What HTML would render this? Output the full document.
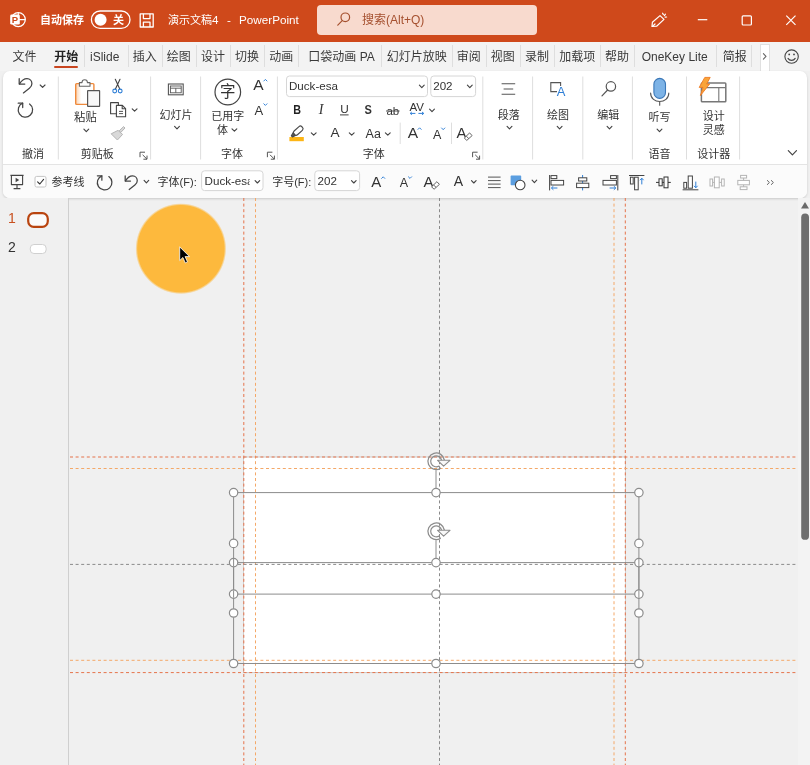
<!DOCTYPE html>
<html lang="zh-CN"><head><meta charset="utf-8"><title>PowerPoint</title>
<style>
*{box-sizing:border-box;margin:0;padding:0}
html,body{width:810px;height:765px;overflow:hidden}
body{background:#f0f0f0;font-family:"Liberation Sans","Noto Sans CJK SC",sans-serif;font-size:12px;color:#333;position:relative}
.abs{position:absolute}
#title{left:0;top:0;width:810px;height:42px;background:#cf491b}
#title .t{position:absolute;color:#fff;font-size:12px;line-height:16px;white-space:nowrap}
#search{left:317px;top:5px;width:220px;height:30px;background:#f8dace;border-radius:4px}
#tabs{left:0;top:42px;width:810px;height:29px;background:#f3f3f3}
#tabs .tb{position:absolute;top:7.3px;font-size:12px;line-height:16px;color:#3a3a3a;white-space:nowrap}
#tabs .sep{position:absolute;top:3px;width:1px;height:22px;background:#dedede}
#panel{left:3px;top:71px;width:803.5px;height:126.5px;background:#fff;border-radius:7px;box-shadow:0 1px 2.5px rgba(0,0,0,.16)}
#panel .hl{position:absolute;left:0;top:92.8px;width:803.5px;height:1.4px;background:#e4e4e4}
#panel .qb{position:absolute;left:0;top:94px;width:803.5px;height:32.5px;background:#fbfbfb;border-radius:0 0 7px 7px}
#left{left:0;top:198px;width:69px;height:567px;background:#f0f0f0;border-right:1px solid #cfcfcf}
svg{position:absolute;left:0;top:0;overflow:visible}
svg text{font-family:"Liberation Sans","Noto Sans CJK SC",sans-serif}
#wrap{position:absolute;left:0;top:0;width:810px;height:765px;will-change:transform}
</style></head><body><div id="wrap">

<div id="title" class="abs">
<div class="t" style="left:40px;top:11.5px;font-size:11px;font-weight:bold">自动保存</div>
<div class="t" style="left:113px;top:11.5px;font-size:11px;font-weight:bold">关</div>
<div class="t" style="left:168px;top:11.5px;font-size:11px">演示文稿</div>
<div class="t" style="left:212px;top:11.5px;font-size:11.7px">4</div>
<div class="t" style="left:227px;top:11.5px;font-size:11.7px">-</div>
<div class="t" style="left:239px;top:11.5px;font-size:11.7px">PowerPoint</div>
<div id="search" class="abs"><span class="abs" style="left:45px;top:7px;font-size:12px;line-height:16px;color:#a5502f;white-space:nowrap">搜索(Alt+Q)</span></div>
</div>
<div id="tabs" class="abs">
<span class="tb" style="left:12.5px">文件</span>
<span class="tb" style="left:54.3px;font-weight:bold;color:#222">开始</span>
<span class="tb" style="left:90px">iSlide</span>
<span class="tb" style="left:132.7px">插入</span>
<span class="tb" style="left:166.7px">绘图</span>
<span class="tb" style="left:201px">设计</span>
<span class="tb" style="left:235px">切换</span>
<span class="tb" style="left:269.3px">动画</span>
<span class="tb" style="left:308.3px">口袋动画 PA</span>
<span class="tb" style="left:386.7px">幻灯片放映</span>
<span class="tb" style="left:456.7px">审阅</span>
<span class="tb" style="left:490.7px">视图</span>
<span class="tb" style="left:525px">录制</span>
<span class="tb" style="left:559.3px">加载项</span>
<span class="tb" style="left:605px">帮助</span>
<span class="tb" style="left:641.7px">OneKey Lite</span>
<span class="tb" style="left:722.7px">简报</span>
<i class="sep" style="left:83.8px"></i>
<i class="sep" style="left:127.80000000000001px"></i>
<i class="sep" style="left:161.8px"></i>
<i class="sep" style="left:196.2px"></i>
<i class="sep" style="left:230.2px"></i>
<i class="sep" style="left:263.8px"></i>
<i class="sep" style="left:297.8px"></i>
<i class="sep" style="left:381.2px"></i>
<i class="sep" style="left:451.8px"></i>
<i class="sep" style="left:485.5px"></i>
<i class="sep" style="left:519.5px"></i>
<i class="sep" style="left:553.5px"></i>
<i class="sep" style="left:599.5px"></i>
<i class="sep" style="left:633.8px"></i>
<i class="sep" style="left:716.2px"></i>
<i class="sep" style="left:751.2px"></i>
<i class="abs" style="left:54.3px;top:24px;width:24px;height:2.4px;background:#c8451f;border-radius:1px"></i>
<i class="abs" style="left:759.5px;top:1.5px;width:10.5px;height:28px;background:#fff;border:1px solid #e0e0e0;border-bottom:none"></i>
</div>
<div id="panel" class="abs"><div class="qb"></div><div class="hl"></div></div>
<div id="left" class="abs"></div>
<div class="abs" style="left:8px;top:210px;font-size:14px;line-height:17px;color:#c8501f">1</div>
<div class="abs" style="left:8px;top:238.5px;font-size:14px;line-height:17px;color:#333">2</div>
<svg id="cv" width="810" height="765" viewBox="0 0 810 765">
<rect x="798" y="198" width="12" height="567" fill="#f3f3f3"/>
<rect x="243.5" y="457" width="382" height="215.6" fill="#fff"/>
<rect x="243.5" y="457" width="382" height="215.6" fill="none" stroke="#c8c8c8" stroke-width="0.9"/>
<defs><radialGradient id="og" cx="50%" cy="50%" r="50%"><stop offset="0" stop-color="#fdb93d"/><stop offset="0.95" stop-color="#fdb93d"/><stop offset="1" stop-color="#fdb93d" stop-opacity="0"/></radialGradient></defs>
<circle cx="180.9" cy="248.7" r="45.5" fill="url(#og)"/>
<line x1="243.8" y1="198" x2="243.8" y2="765" stroke="#e5734a" stroke-width="1" stroke-dasharray="3 2.6"/>
<line x1="255.5" y1="198" x2="255.5" y2="765" stroke="#f4a868" stroke-width="1" stroke-dasharray="3 2.6"/>
<line x1="614" y1="198" x2="614" y2="765" stroke="#f4a868" stroke-width="1" stroke-dasharray="3 2.6"/>
<line x1="625.3" y1="198" x2="625.3" y2="765" stroke="#e5734a" stroke-width="1" stroke-dasharray="3 2.6"/>
<line x1="70" y1="457" x2="798" y2="457" stroke="#e5734a" stroke-width="1" stroke-dasharray="3 2.6"/>
<line x1="70" y1="468.5" x2="798" y2="468.5" stroke="#f4a868" stroke-width="1" stroke-dasharray="3 2.6"/>
<line x1="70" y1="660.3" x2="798" y2="660.3" stroke="#f4a868" stroke-width="1" stroke-dasharray="3 2.6"/>
<line x1="70" y1="672.6" x2="798" y2="672.6" stroke="#e5734a" stroke-width="1" stroke-dasharray="3 2.6"/>
<line x1="439.5" y1="198" x2="439.5" y2="765" stroke="#8a8a8a" stroke-width="1" stroke-dasharray="3 2.6"/>
<line x1="70" y1="564.4" x2="798" y2="564.4" stroke="#8a8a8a" stroke-width="1" stroke-dasharray="3 2.6"/>
<rect x="233.6" y="492.6" width="405.3" height="101.5" fill="none" stroke="#8c8c8c" stroke-width="1"/>
<line x1="436" y1="470.20000000000005" x2="436" y2="492.6" stroke="#8c8c8c" stroke-width="1"/>
<rect x="233.6" y="562.6" width="405.3" height="100.9" fill="none" stroke="#8c8c8c" stroke-width="1"/>
<line x1="436" y1="540.2" x2="436" y2="562.6" stroke="#8c8c8c" stroke-width="1"/>
<circle cx="233.6" cy="492.6" r="4.2" fill="#fff" stroke="#8c8c8c" stroke-width="1.2"/>
<circle cx="436" cy="492.6" r="4.2" fill="#fff" stroke="#8c8c8c" stroke-width="1.2"/>
<circle cx="638.9" cy="492.6" r="4.2" fill="#fff" stroke="#8c8c8c" stroke-width="1.2"/>
<circle cx="233.6" cy="543.4" r="4.2" fill="#fff" stroke="#8c8c8c" stroke-width="1.2"/>
<circle cx="638.9" cy="543.4" r="4.2" fill="#fff" stroke="#8c8c8c" stroke-width="1.2"/>
<circle cx="233.6" cy="594.1" r="4.2" fill="#fff" stroke="#8c8c8c" stroke-width="1.2"/>
<circle cx="436" cy="594.1" r="4.2" fill="#fff" stroke="#8c8c8c" stroke-width="1.2"/>
<circle cx="638.9" cy="594.1" r="4.2" fill="#fff" stroke="#8c8c8c" stroke-width="1.2"/>
<g transform="translate(436.2 461.3)" fill="none" stroke="#8c8c8c" stroke-width="1.25" stroke-linejoin="round"><path d="M8.2 -1.2A8.3 8.3 0 1 0 4.15 7.2L2.75 4.76A5.5 5.5 0 1 1 5.4 -1"/><path d="M1.4 -1H13.8L7.4 4.9Z" fill="#f8f8f8" stroke-width="1.15"/></g>
<circle cx="233.6" cy="562.6" r="4.2" fill="#fff" stroke="#8c8c8c" stroke-width="1.2"/>
<circle cx="436" cy="562.6" r="4.2" fill="#fff" stroke="#8c8c8c" stroke-width="1.2"/>
<circle cx="638.9" cy="562.6" r="4.2" fill="#fff" stroke="#8c8c8c" stroke-width="1.2"/>
<circle cx="233.6" cy="613.0" r="4.2" fill="#fff" stroke="#8c8c8c" stroke-width="1.2"/>
<circle cx="638.9" cy="613.0" r="4.2" fill="#fff" stroke="#8c8c8c" stroke-width="1.2"/>
<circle cx="233.6" cy="663.5" r="4.2" fill="#fff" stroke="#8c8c8c" stroke-width="1.2"/>
<circle cx="436" cy="663.5" r="4.2" fill="#fff" stroke="#8c8c8c" stroke-width="1.2"/>
<circle cx="638.9" cy="663.5" r="4.2" fill="#fff" stroke="#8c8c8c" stroke-width="1.2"/>
<g transform="translate(436.2 531.3)" fill="none" stroke="#8c8c8c" stroke-width="1.25" stroke-linejoin="round"><path d="M8.2 -1.2A8.3 8.3 0 1 0 4.15 7.2L2.75 4.76A5.5 5.5 0 1 1 5.4 -1"/><path d="M1.4 -1H13.8L7.4 4.9Z" fill="#f8f8f8" stroke-width="1.15"/></g>
<line x1="233.6" y1="559.0" x2="233.6" y2="566.2" stroke="#8c8c8c" stroke-width="1"/>
<line x1="233.6" y1="590.5" x2="233.6" y2="597.7" stroke="#8c8c8c" stroke-width="1"/>
<line x1="638.9" y1="559.0" x2="638.9" y2="566.2" stroke="#8c8c8c" stroke-width="1"/>
<line x1="638.9" y1="590.5" x2="638.9" y2="597.7" stroke="#8c8c8c" stroke-width="1"/>
<path d="M179.7 246.9v13.6l3.2-3 2.4 5.4 2.2-1-2.4-5.3h4.4z" fill="#000" stroke="#fff" stroke-width="0.8"/>
<rect x="801.2" y="213.5" width="7.8" height="326.3" rx="3.9" fill="#6e6e6e"/>
<path d="M801 208.6L805 202l4 6.6z" fill="#6a6a6a"/>
<rect x="28.2" y="213.2" width="19.6" height="13.6" rx="5.5" fill="#fbfbfb" stroke="#b9440f" stroke-width="2.2"/>
<rect x="30.3" y="244.5" width="15.8" height="9" rx="3.6" fill="#fff" stroke="#d0d0d0" stroke-width="1"/>
</svg>
<svg id="rb" width="810" height="200" viewBox="0 0 810 200">
<g fill="none" stroke="#fff" stroke-width="1.3"><circle cx="18.3" cy="19.6" r="7"/><path d="M18.3 12.6V19.6H25.3" stroke-width="1.1"/></g>
<rect x="10.2" y="14.6" width="9.6" height="10" rx="1.4" fill="#fff"/>
<text x="15" y="23.2" font-size="9.5" font-weight="bold" text-anchor="middle" fill="#cf491b">P</text>
<rect x="91.4" y="11" width="38.6" height="17.4" rx="8.7" fill="none" stroke="#fff" stroke-width="1.3"/>
<circle cx="100.6" cy="19.7" r="6" fill="#fff"/>
<g fill="none" stroke="#fff" stroke-width="1.3" stroke-linejoin="round"><path d="M140.2 13.8H153.2V27H140.2Z"/><path d="M143.4 13.8V18.6H150V13.8"/><path d="M143.4 27V22.2H150V27"/></g>
<g fill="none" stroke="#a5502f" stroke-width="1.2" stroke-linecap="round"><circle cx="345.3" cy="17.3" r="4.3"/><path d="M342.2 20.6L337.8 25.2"/></g>
<g fill="none" stroke="#fff" stroke-width="1.2" stroke-linecap="round" stroke-linejoin="round"><path d="M660 15.6L664 19.4L656.6 26.2L652 26.4L652.4 22.2Z"/><path d="M652.4 26.4L655 24"/><path d="M662.6 13.2L663.4 14.6M665.4 14.2L664.4 15.6M666.6 17L665.2 17.2"/></g>
<g fill="none" stroke="#fff" stroke-width="1.2"><path d="M697.8 19.7H707.3"/><rect x="742.2" y="15.8" width="9.2" height="9.2" rx="1"/><path d="M786.3 15.6L795.5 24.8M795.5 15.6L786.3 24.8"/></g>
<path d="M763.4 53.6L766 56.4L763.4 59.2" fill="none" stroke="#666" stroke-width="1.1" stroke-linecap="round" stroke-linejoin="round"/>
<g fill="none" stroke="#444" stroke-width="1.1" stroke-linecap="round"><circle cx="791.6" cy="56.6" r="6.7"/><path d="M788 58.4C789.6 61 793.6 61 795.2 58.4"/></g><circle cx="789.2" cy="54.4" r="0.9" fill="#444"/><circle cx="794" cy="54.4" r="0.9" fill="#444"/>
<line x1="58.3" y1="76.5" x2="58.3" y2="159.5" stroke="#dedede" stroke-width="1"/>
<line x1="150.6" y1="76.5" x2="150.6" y2="159.5" stroke="#dedede" stroke-width="1"/>
<line x1="200.6" y1="76.5" x2="200.6" y2="159.5" stroke="#dedede" stroke-width="1"/>
<line x1="277.4" y1="76.5" x2="277.4" y2="159.5" stroke="#dedede" stroke-width="1"/>
<line x1="482.8" y1="76.5" x2="482.8" y2="159.5" stroke="#dedede" stroke-width="1"/>
<line x1="532.6" y1="76.5" x2="532.6" y2="159.5" stroke="#dedede" stroke-width="1"/>
<line x1="582.8" y1="76.5" x2="582.8" y2="159.5" stroke="#dedede" stroke-width="1"/>
<line x1="632.4" y1="76.5" x2="632.4" y2="159.5" stroke="#dedede" stroke-width="1"/>
<line x1="686.5" y1="76.5" x2="686.5" y2="159.5" stroke="#dedede" stroke-width="1"/>
<line x1="739.6" y1="76.5" x2="739.6" y2="159.5" stroke="#dedede" stroke-width="1"/>
<g transform="translate(19.2 78.5) scale(1.0) translate(-19.2 -78.5)" fill="none" stroke="#444" stroke-width="1.25" stroke-linecap="round" stroke-linejoin="round"><path d="M19.2 78.7V84.1H24.8"/><path d="M19.5 83.9C21.5 80.5 24 78.6 27 78.6C30 78.6 31.9 81 31.9 83.8C31.9 85.6 31 87 29.4 88.2L23.4 92.9"/></g>
<path d="M40.2 85.0L42.6 87.4L45.0 85.0" fill="none" stroke="#444" stroke-width="1.15" stroke-linecap="round" stroke-linejoin="round"/>
<path d="M29.58 104.00A7.2 7.2 0 1 1 22.70 103.20" fill="none" stroke="#444" stroke-width="1.25" stroke-linecap="round"/>
<path d="M18.20 103.20H22.70V107.60" fill="none" stroke="#444" stroke-width="1.25" stroke-linecap="round" stroke-linejoin="round"/>
<text x="33" y="158.1" font-size="11" text-anchor="middle" fill="#333" font-weight="normal" >撤消</text>
<defs><linearGradient id="pg" x1="0" x2="1" y1="0" y2="0"><stop offset="0" stop-color="#fbd3b0"/><stop offset="0.3" stop-color="#fff"/></linearGradient></defs>
<rect x="75.7" y="83.6" width="18.2" height="20.8" rx="1" fill="url(#pg)" stroke="#ef8a3c" stroke-width="1.4"/>
<path d="M79.4 86.2V82.6H82C82 78.8 87.4 78.8 87.4 82.6H90V86.2Z" fill="#fff" stroke="#666" stroke-width="1.1" stroke-linejoin="round"/>
<rect x="87.6" y="90.6" width="12" height="15.8" rx="0.4" fill="#f8f8f8" stroke="#555" stroke-width="1.2"/>
<text x="85.4" y="121.2" font-size="11.3" text-anchor="middle" fill="#333" font-weight="normal" >粘贴</text>
<path d="M83.9 129.2L86.3 131.6L88.7 129.2" fill="none" stroke="#444" stroke-width="1.15" stroke-linecap="round" stroke-linejoin="round"/>
<g fill="none" stroke="#444" stroke-width="1.1" stroke-linecap="round"><path d="M115.3 79.2L120 89.4M120 79.2L115.2 89.4"/></g>
<g fill="none" stroke="#2f7fd6" stroke-width="1.1"><circle cx="114.7" cy="91" r="1.9"/><circle cx="120.2" cy="91" r="1.9"/></g>
<g fill="#fff" stroke="#444" stroke-width="1.1" stroke-linejoin="round"><path d="M110.6 102.6H118.4V113.8H110.6Z"/><path d="M116.4 105.4H122.4L125.6 108.6V116.8H116.4Z"/><path d="M122.2 105.6V108.8H125.4" fill="none"/><path d="M119 111.4H123M119 113.6H123" stroke-width="0.9"/></g>
<path d="M132.2 108.8L134.6 111.2L137.0 108.8" fill="none" stroke="#444" stroke-width="1.15" stroke-linecap="round" stroke-linejoin="round"/>
<g fill="#d9d9d9" stroke="#b4b4b4" stroke-width="1" stroke-linejoin="round"><path d="M123.6 126.6L125 128L120.8 132.4L119.2 130.8Z"/><path d="M118 130.4L122.6 134.4L117.4 140L111.2 133.8Z"/></g>
<text x="97.2" y="158.1" font-size="11" text-anchor="middle" fill="#333" font-weight="normal" >剪贴板</text>
<path d="M140 157.2V152.2H145M142.6 154.79999999999998L147 159.2M147 155.6V159.2H143.4" fill="none" stroke="#555" stroke-width="1"/>
<g fill="none" stroke="#555" stroke-width="1.1"><rect x="168.4" y="84" width="14.8" height="10.8"/><rect x="170.4" y="86" width="10.8" height="6.8" stroke-width="0.9"/><path d="M170.4 88.2H181.2M175.8 88.2V92.8" stroke-width="0.9"/></g>
<text x="176" y="118.6" font-size="11" text-anchor="middle" fill="#333" font-weight="normal" >幻灯片</text>
<path d="M174.6 126.4L177.0 128.8L179.4 126.4" fill="none" stroke="#444" stroke-width="1.15" stroke-linecap="round" stroke-linejoin="round"/>
<circle cx="227.8" cy="92" r="12.8" fill="none" stroke="#444" stroke-width="1.2"/>
<text x="227.8" y="97.3" font-size="15.5" text-anchor="middle" fill="#333" font-weight="normal" >字</text>
<text x="227.8" y="120.0" font-size="11" text-anchor="middle" fill="#333" font-weight="normal" >已用字</text>
<text x="222.4" y="133.5" font-size="11" text-anchor="middle" fill="#333" font-weight="normal" >体</text>
<path d="M232.0 128.8L234.4 131.2L236.8 128.8" fill="none" stroke="#444" stroke-width="1.15" stroke-linecap="round" stroke-linejoin="round"/>
<text x="232" y="157.7" font-size="11" text-anchor="middle" fill="#333" font-weight="normal" >字体</text>
<text x="258.4" y="90.3" font-size="15.5" text-anchor="middle" fill="#333" font-weight="normal" >A</text>
<path d="M263.8 81.0L265.4 79.4L267.0 81.0" fill="none" stroke="#2f7fd6" stroke-width="0.95" stroke-linecap="round" stroke-linejoin="round"/>
<text x="258.8" y="114.5" font-size="13" text-anchor="middle" fill="#333" font-weight="normal" >A</text>
<path d="M263.8 103.8L265.4 105.4L267.0 103.8" fill="none" stroke="#2f7fd6" stroke-width="0.95" stroke-linecap="round" stroke-linejoin="round"/>
<path d="M267.4 157.2V152.2H272.4M270.0 154.79999999999998L274.4 159.2M274.4 155.6V159.2H270.79999999999995" fill="none" stroke="#555" stroke-width="1"/>
<rect x="286.5" y="76" width="141" height="20.6" rx="3" fill="#fff" stroke="#d6d6d6" stroke-width="1"/>
<text x="289" y="89.9" font-size="11.6" text-anchor="start" fill="#333" font-weight="normal" >Duck-esa</text>
<path d="M419.4 85.2L421.8 87.6L424.2 85.2" fill="none" stroke="#444" stroke-width="1.15" stroke-linecap="round" stroke-linejoin="round"/>
<rect x="430.8" y="76" width="44.8" height="20.6" rx="3" fill="#fff" stroke="#d6d6d6" stroke-width="1"/>
<text x="433.2" y="89.9" font-size="11.6" text-anchor="start" fill="#333" font-weight="normal" >202</text>
<path d="M467.4 85.2L469.8 87.6L472.2 85.2" fill="none" stroke="#444" stroke-width="1.15" stroke-linecap="round" stroke-linejoin="round"/>
<text transform="translate(297.2 113.6) scale(0.84 1)" font-size="12.8" font-weight="bold" text-anchor="middle" fill="#222">B</text>
<text x="321" y="113.6" font-size="14" text-anchor="middle" fill="#333" font-style="italic" font-family="Liberation Serif,serif" style="font-family:'Liberation Serif',serif">I</text>
<text x="344.4" y="113.0" font-size="11.8" text-anchor="middle" fill="#333" font-weight="normal" >U</text>
<path d="M340 114.9H348.6" stroke="#444" stroke-width="1"/>
<text transform="translate(368.2 113.6) scale(0.86 1)" font-size="12.8" font-weight="bold" text-anchor="middle" fill="#333">S</text>
<text x="392.8" y="114.8" font-size="11.5" text-anchor="middle" fill="#333" font-weight="normal" >ab</text>
<path d="M386 111H399.6" stroke="#444" stroke-width="0.9"/>
<text x="416.8" y="110.7" font-size="11.5" text-anchor="middle" fill="#333" font-weight="normal" >AV</text>
<path d="M410.4 113.4H415.4M411.8 112L410.2 113.4L411.8 114.8M418.4 113.4H423.6M422 112L423.8 113.4L422 114.8" fill="none" stroke="#2f7fd6" stroke-width="1"/>
<path d="M429.6 109.2L432.0 111.6L434.4 109.2" fill="none" stroke="#444" stroke-width="1.15" stroke-linecap="round" stroke-linejoin="round"/>
<rect x="289.4" y="137" width="14.4" height="4.2" fill="#fdb515"/>
<g transform="translate(297.4 131.4) rotate(-42)" fill="#fff" stroke="#4a4a4a" stroke-width="1.15" stroke-linejoin="round"><rect x="-4.2" y="-2.5" width="10.6" height="5" rx="2"/><path d="M-4.2 -1.8L-7.4 -0.8V0.8L-4.2 1.8Z" fill="#555"/></g>
<path d="M311.3 132.8L313.7 135.2L316.1 132.8" fill="none" stroke="#444" stroke-width="1.15" stroke-linecap="round" stroke-linejoin="round"/>
<text x="335" y="136.5" font-size="13.6" text-anchor="middle" fill="#333" font-weight="normal" >A</text>
<path d="M349.3 132.8L351.7 135.2L354.1 132.8" fill="none" stroke="#444" stroke-width="1.15" stroke-linecap="round" stroke-linejoin="round"/>
<text x="373.2" y="138.2" font-size="12.5" text-anchor="middle" fill="#333" font-weight="normal" >Aa</text>
<path d="M385.4 132.8L387.8 135.2L390.2 132.8" fill="none" stroke="#444" stroke-width="1.15" stroke-linecap="round" stroke-linejoin="round"/>
<line x1="400.2" y1="122.6" x2="400.2" y2="144" stroke="#dedede" stroke-width="1"/>
<text x="412.8" y="138.1" font-size="15.5" text-anchor="middle" fill="#333" font-weight="normal" >A</text>
<path d="M418.0 129.4L419.6 127.8L421.2 129.4" fill="none" stroke="#2f7fd6" stroke-width="0.95" stroke-linecap="round" stroke-linejoin="round"/>
<text x="437.2" y="138.6" font-size="12.5" text-anchor="middle" fill="#333" font-weight="normal" >A</text>
<path d="M441.6 128.0L443.2 129.7L444.8 128.0" fill="none" stroke="#2f7fd6" stroke-width="0.95" stroke-linecap="round" stroke-linejoin="round"/>
<line x1="451.5" y1="122.6" x2="451.5" y2="144" stroke="#dedede" stroke-width="1"/>
<text x="461.6" y="138.0" font-size="15" text-anchor="middle" fill="#333" font-weight="normal" >A</text>
<path d="M464.3 138.1L469.6 132.9L472.1 135.6L466.8 140.4Z M466.3 136.2L468.8 138.6" fill="#fff" stroke="#555" stroke-width="0.9" stroke-linejoin="round"/>
<text x="373.7" y="158.1" font-size="11" text-anchor="middle" fill="#333" font-weight="normal" >字体</text>
<path d="M472.6 157.2V152.2H477.6M475.20000000000005 154.79999999999998L479.6 159.2M479.6 155.6V159.2H476.0" fill="none" stroke="#555" stroke-width="1"/>
<path d="M501.6 83.8H515.2M503.6 89H513.2M501.6 94.3H515.2" stroke="#555" stroke-width="1.1"/>
<text x="508.7" y="118.6" font-size="11" text-anchor="middle" fill="#333" font-weight="normal" >段落</text>
<path d="M507.1 126.4L509.5 128.8L511.9 126.4" fill="none" stroke="#444" stroke-width="1.15" stroke-linecap="round" stroke-linejoin="round"/>
<path d="M557 91.6H550.8V82.6H560.6V86" fill="none" stroke="#555" stroke-width="1.1"/>
<text x="561" y="96.0" font-size="13" text-anchor="middle" fill="#2f7fd6" font-weight="normal" >A</text>
<text x="558.1" y="118.6" font-size="11" text-anchor="middle" fill="#333" font-weight="normal" >绘图</text>
<path d="M557.2 126.4L559.6 128.8L562.0 126.4" fill="none" stroke="#444" stroke-width="1.15" stroke-linecap="round" stroke-linejoin="round"/>
<g fill="none" stroke="#555" stroke-width="1.2" stroke-linecap="round"><circle cx="610.9" cy="86.4" r="4.7"/><path d="M607.6 90L602 95.8"/></g>
<text x="608.3" y="118.6" font-size="11" text-anchor="middle" fill="#333" font-weight="normal" >编辑</text>
<path d="M607.1 126.4L609.5 128.8L611.9 126.4" fill="none" stroke="#444" stroke-width="1.15" stroke-linecap="round" stroke-linejoin="round"/>
<rect x="653.9" y="78.4" width="11.6" height="20" rx="5.8" fill="#7db3e6" stroke="#3b78b8" stroke-width="1.1"/>
<path d="M650.6 93C650.6 104.4 668.8 104.4 668.8 93M659.7 101.6V105.2" fill="none" stroke="#555" stroke-width="1.1" stroke-linecap="round"/>
<text x="659.6" y="120.6" font-size="11" text-anchor="middle" fill="#333" font-weight="normal" >听写</text>
<path d="M657.1 129.2L659.5 131.6L661.9 129.2" fill="none" stroke="#444" stroke-width="1.15" stroke-linecap="round" stroke-linejoin="round"/>
<text x="659.6" y="157.7" font-size="11" text-anchor="middle" fill="#333" font-weight="normal" >语音</text>
<g fill="none" stroke="#777" stroke-width="1.5"><rect x="701.4" y="83" width="24.4" height="18.8" rx="0.8"/><path d="M701.4 87.6H725.8M718.8 87.6V101.8" stroke-width="1.1"/></g>
<path d="M704.8 77.4H710.2L706.6 84H709.6L700.4 95.6L703 87.4H699.2Z" fill="#f9a43a" stroke="#ee7b22" stroke-width="0.9" stroke-linejoin="round"/>
<text x="713.7" y="120.2" font-size="11" text-anchor="middle" fill="#333" font-weight="normal" >设计</text>
<text x="713.7" y="133.8" font-size="11" text-anchor="middle" fill="#333" font-weight="normal" >灵感</text>
<text x="713.7" y="158.1" font-size="11" text-anchor="middle" fill="#333" font-weight="normal" >设计器</text>
<path d="M788.3 150.7L792.4 154.9L796.5 150.7" fill="none" stroke="#444" stroke-width="1.2" stroke-linecap="round" stroke-linejoin="round"/>
<g fill="none" stroke="#444" stroke-width="1.1" stroke-linejoin="round"><path d="M10.4 175.4H23.6M11.4 175.4V184.6H22.6V175.4M17 184.6V188.6M13.6 188.6H20.4"/></g><path d="M15.6 177.8L19.2 180L15.6 182.2Z" fill="#444"/>
<rect x="35" y="176.4" width="11" height="10.6" rx="1.6" fill="#fff" stroke="#c4c4c4" stroke-width="1"/>
<path d="M37.6 181.8L39.8 184L43.6 179.4" fill="none" stroke="#333" stroke-width="1.1" stroke-linecap="round" stroke-linejoin="round"/>
<text x="51.4" y="186.1" font-size="11" text-anchor="start" fill="#333" font-weight="normal" >参考线</text>
<path d="M108.83 176.61A7.3 7.3 0 1 1 101.86 175.81" fill="none" stroke="#444" stroke-width="1.25" stroke-linecap="round"/>
<path d="M97.36 175.81H101.86V180.21" fill="none" stroke="#444" stroke-width="1.25" stroke-linecap="round" stroke-linejoin="round"/>
<g transform="translate(125.2 175.8) scale(0.95) translate(-19.2 -78.5)" fill="none" stroke="#444" stroke-width="1.32" stroke-linecap="round" stroke-linejoin="round"><path d="M19.2 78.7V84.1H24.8"/><path d="M19.5 83.9C21.5 80.5 24 78.6 27 78.6C30 78.6 31.9 81 31.9 83.8C31.9 85.6 31 87 29.4 88.2L23.4 92.9"/></g>
<path d="M144.1 180.4L146.4 182.8L148.7 180.4" fill="none" stroke="#444" stroke-width="1.15" stroke-linecap="round" stroke-linejoin="round"/>
<text x="157.6" y="185.5" font-size="11" text-anchor="start" fill="#333" font-weight="normal" >字体(F):</text>
<rect x="201.6" y="170.8" width="61.4" height="19.8" rx="3" fill="#fff" stroke="#d6d6d6" stroke-width="1"/>
<clipPath id="cp1"><rect x="202" y="171" width="47.6" height="19"/></clipPath>
<text x="204.6" y="184.9" font-size="11.6" text-anchor="start" fill="#333" font-weight="normal" clip-path="url(#cp1)">Duck-esa</text>
<path d="M255.1 180.7L257.4 183.0L259.7 180.7" fill="none" stroke="#444" stroke-width="1.15" stroke-linecap="round" stroke-linejoin="round"/>
<text x="272.2" y="185.5" font-size="11" text-anchor="start" fill="#333" font-weight="normal" >字号(F):</text>
<rect x="314.8" y="170.8" width="44.8" height="19.8" rx="3" fill="#fff" stroke="#d6d6d6" stroke-width="1"/>
<text x="317.6" y="184.9" font-size="11.6" text-anchor="start" fill="#333" font-weight="normal" >202</text>
<path d="M351.5 180.7L353.8 183.0L356.1 180.7" fill="none" stroke="#444" stroke-width="1.15" stroke-linecap="round" stroke-linejoin="round"/>
<text x="376.2" y="187.2" font-size="15" text-anchor="middle" fill="#333" font-weight="normal" >A</text>
<path d="M381.6 178.4L383.2 176.8L384.8 178.4" fill="none" stroke="#2f7fd6" stroke-width="0.95" stroke-linecap="round" stroke-linejoin="round"/>
<text x="404" y="187.2" font-size="12.5" text-anchor="middle" fill="#333" font-weight="normal" >A</text>
<path d="M408.4 176.8L410.0 178.4L411.6 176.8" fill="none" stroke="#2f7fd6" stroke-width="0.95" stroke-linecap="round" stroke-linejoin="round"/>
<text x="428.4" y="187.0" font-size="15" text-anchor="middle" fill="#333" font-weight="normal" >A</text>
<path d="M431.6 186.9L436.9 181.7L439.4 184.4L434.1 189.2Z M433.6 185L436.1 187.4" fill="#fff" stroke="#555" stroke-width="0.9" stroke-linejoin="round"/>
<text x="458.4" y="185.8" font-size="14" text-anchor="middle" fill="#333" font-weight="normal" >A</text>
<path d="M471.5 180.7L473.8 183.0L476.1 180.7" fill="none" stroke="#444" stroke-width="1.15" stroke-linecap="round" stroke-linejoin="round"/>
<path d="M488 177.1H500.6M488 180.6H500.6M488 184.1H500.6M488 187.6H500.6" stroke="#555" stroke-width="1"/>
<rect x="510.6" y="175.6" width="10.6" height="9.6" rx="0.8" fill="#5b9ee0"/>
<circle cx="520.2" cy="185" r="4.8" fill="#fff" stroke="#444" stroke-width="1.1"/>
<path d="M532.1 180.2L534.4 182.6L536.7 180.2" fill="none" stroke="#444" stroke-width="1.15" stroke-linecap="round" stroke-linejoin="round"/>
<g fill="#fff" stroke="#444" stroke-width="1"><path d="M549.6 175V190.4" /><rect x="551" y="175.6" width="5.8" height="3"/><rect x="551" y="180.4" width="12.6" height="4.6"/></g>
<path d="M557.4 188H551.6M553.4 186.2L551.4 188L553.4 189.8" fill="none" stroke="#2f7fd6" stroke-width="1"/>
<path d="M582.6 175V190.4" stroke="#2f7fd6" stroke-width="1"/>
<g fill="#fff" stroke="#444" stroke-width="1"><rect x="578.6" y="177.8" width="8.2" height="3.2"/><rect x="576.6" y="183.2" width="12.2" height="4.4"/></g>
<g fill="#fff" stroke="#444" stroke-width="1"><path d="M617.8 175V190.4"/><rect x="610.6" y="175.6" width="5.8" height="3"/><rect x="603" y="180.4" width="13.4" height="4.6"/></g>
<path d="M609.6 188H615.6M613.8 186.2L615.8 188L613.8 189.8" fill="none" stroke="#2f7fd6" stroke-width="1"/>
<g fill="#fff" stroke="#444" stroke-width="1"><path d="M629 175.5H644.4"/><rect x="630.4" y="177.2" width="2.8" height="6.8"/><rect x="634.6" y="177.2" width="3.6" height="12.6"/></g>
<path d="M641.8 184.4V178.4M640 180.2L641.8 178.2L643.6 180.2" fill="none" stroke="#2f7fd6" stroke-width="1"/>
<g fill="#fff" stroke="#333" stroke-width="1"><path d="M656 182.4H670.8"/><rect x="659" y="178.8" width="3.2" height="7"/><rect x="664" y="177" width="4" height="10.8"/></g>
<g fill="#fff" stroke="#444" stroke-width="1"><path d="M682.6 189.8H698.4"/><rect x="683.8" y="182.4" width="2.8" height="5.8"/><rect x="688.2" y="176" width="4.2" height="12.2"/></g>
<path d="M695.8 181.6V187.6M694 185.8L695.8 187.8L697.6 185.8" fill="none" stroke="#2f7fd6" stroke-width="1"/>
<g fill="#fff" stroke="#b4b4b4" stroke-width="1"><rect x="710" y="179" width="2.6" height="7"/><rect x="714.4" y="177" width="4.8" height="10.8"/><rect x="721.6" y="179" width="2.6" height="7"/><path d="M712.6 182.4H714.4M719.2 182.4H721.6"/></g>
<g fill="#fff" stroke="#b4b4b4" stroke-width="1"><rect x="740.6" y="175.4" width="6" height="2.6"/><rect x="737.8" y="180.4" width="11.6" height="4.4"/><rect x="740.2" y="186.8" width="6.8" height="2.8"/><path d="M743.6 178V180.4M743.6 184.8V186.8"/></g>
<path d="M767 180.2L769.4 182.5L767 184.8M771 180.2L773.4 182.5L771 184.8" fill="none" stroke="#666" stroke-width="1"/>
</svg>
</div></body></html>
